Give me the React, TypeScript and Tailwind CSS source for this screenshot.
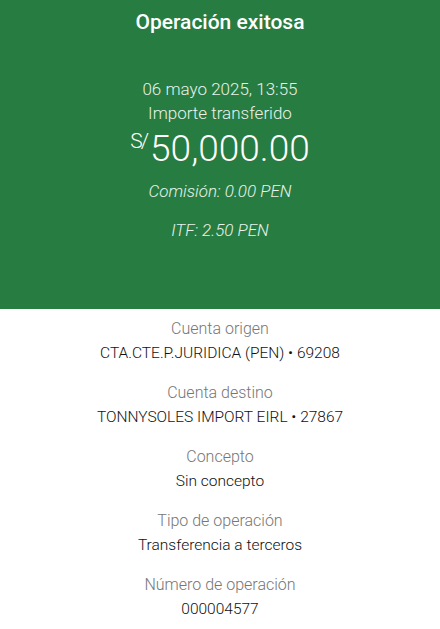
const rows = [
  { label: "Cuenta origen", value: "CTA.CTE.P.JURIDICA (PEN) • 69208" },
  { label: "Cuenta destino", value: "TONNYSOLES IMPORT EIRL • 27867" },
  { label: "Concepto", value: "Sin concepto" },
  { label: "Tipo de operación", value: "Transferencia a terceros" },
  { label: "Número de operación", value: "000004577" },
];

export default function App() {
  return (
    <div className="w-[440px] h-[629px] bg-white font-['Roboto',sans-serif] text-center overflow-hidden">
      <div className="h-[309px] bg-[#277c41] text-white flex flex-col items-center pt-2">
        <h1 className="text-[21px] leading-7 font-medium">Operación exitosa</h1>
        <div className="mt-[41px] text-[17px] leading-6 font-light text-[#e8f3ea]">06 mayo 2025, 13:55</div>
        <div className="text-[17px] leading-6 font-light text-[#e8f3ea]">Importe transferido</div>
        <div className="flex items-start leading-[48px] font-light">
          <span className="text-[21px] leading-[30px] mr-[3px] mt-[1px] tracking-[-2px]">S/</span>
          <span className="text-[37px]">50,000.00</span>
        </div>
        <div className="mt-[6px] text-[17px] leading-6 italic font-light text-[#e8f3ea]">Comisión: 0.00 PEN</div>
        <div className="mt-[15px] text-[17px] leading-6 italic font-light text-[#e8f3ea]">ITF: 2.50 PEN</div>
      </div>
      <div className="flex flex-col gap-4 pt-2">
        {rows.map((r) => (
          <div key={r.label} className="flex flex-col">
            <span className="text-[16px] leading-6 text-[#767676] font-light">{r.label}</span>
            <span className="text-[15.5px] leading-6 text-[#111111] font-light">{r.value}</span>
          </div>
        ))}
      </div>
    </div>
  );
}
